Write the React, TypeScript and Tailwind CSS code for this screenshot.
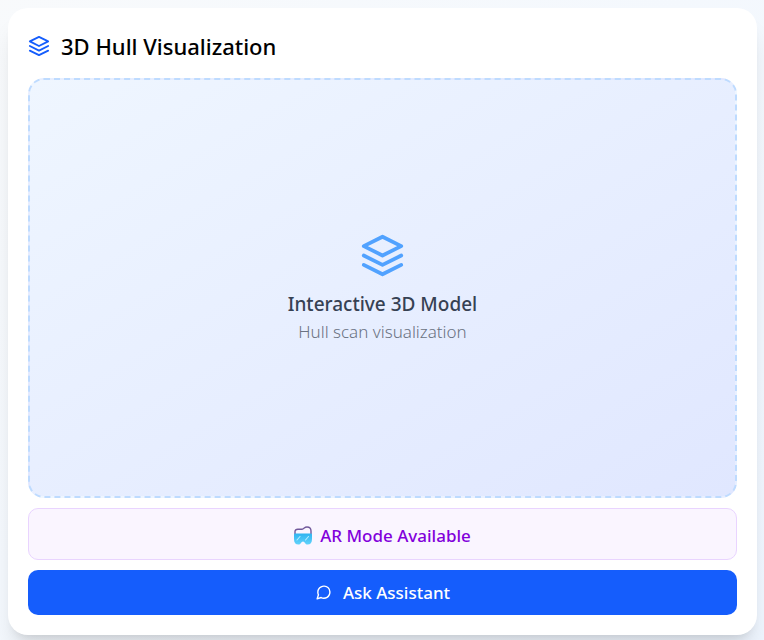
import { FiLayers, FiMessageCircle } from "react-icons/fi";

function GogglesIcon() {
  return (
    <svg className="h-[19px] w-[18px] shrink-0" viewBox="0 0 18 19" fill="none" aria-hidden="true">
      <defs>
        <linearGradient id="lens" x1="0" y1="0" x2="0" y2="1">
          <stop offset="0" stopColor="#2fb4f0" />
          <stop offset="1" stopColor="#62d3fb" />
        </linearGradient>
      </defs>
      {/* strap */}
      <path
        d="M1 8.5V5.6C1 4 2 3.3 3.8 3.3H7.5C9.8 3.2 10.2 1 13 1C15.8 1 17 2.4 17 5V8.5"
        stroke="#71599b"
        strokeWidth="1.4"
      />
      {/* lens */}
      <path
        d="M1 7.6H17Q18 7.6 18 8.8V13C18 16.8 16.4 18.6 13.6 18.6C11.2 18.6 10.8 15.4 9 15.4C7.2 15.4 6.8 18.6 4.4 18.6C1.6 18.6 0 16.8 0 13V8.8Q0 7.6 1 7.6Z"
        fill="url(#lens)"
      />
      <path d="M3 14L6 10.5M11.5 14L14.5 10.5" stroke="#b5edff" strokeWidth="1.1" strokeLinecap="round" />
    </svg>
  );
}

export default function App() {
  return (
    <main className="min-h-screen bg-linear-to-br from-slate-50 to-blue-50 pt-2 pr-[7px] pb-[5px] pl-2 font-['Noto_Sans','Open_Sans',sans-serif]">
      <section className="flex flex-col gap-[10px] rounded-[20px] bg-white p-5 shadow-xl">
        {/* Header */}
        <h2 className="flex h-10 items-center gap-[11px] pb-1 text-[22px] font-medium text-black">
          <FiLayers className="size-[22px] text-[#155dfc]" />
          3D Hull Visualization
        </h2>

        {/* Model viewer */}
        <div className="flex h-[420px] flex-col items-center justify-center rounded-2xl border-2 border-dashed border-[#bedbff] bg-linear-to-br from-[#eff6ff] to-[#e0e7ff] pt-[2px] text-center">
          <FiLayers className="mb-3 size-[45px] text-[#51a2ff]" />
          <p className="text-[19px] leading-7 font-medium text-[#364153]">Interactive 3D Model</p>
          <p className="text-[17px] leading-7 font-light text-[#6a7282]">Hull scan visualization</p>
        </div>

        <div className="flex h-[52px] items-center justify-center gap-2 rounded-[10px] border border-[#e9d4ff] bg-[#faf5ff] pt-[3px] text-[17px] font-medium text-[#8200db]">
          <GogglesIcon />
          AR Mode Available
        </div>

        <button
          type="button"
          className="flex h-[45px] items-center justify-center gap-[11px] rounded-[10px] bg-[#155dfc] text-[17px] font-medium text-white"
        >
          <FiMessageCircle className="size-[17px]" />
          Ask Assistant
        </button>
      </section>
    </main>
  );
}
